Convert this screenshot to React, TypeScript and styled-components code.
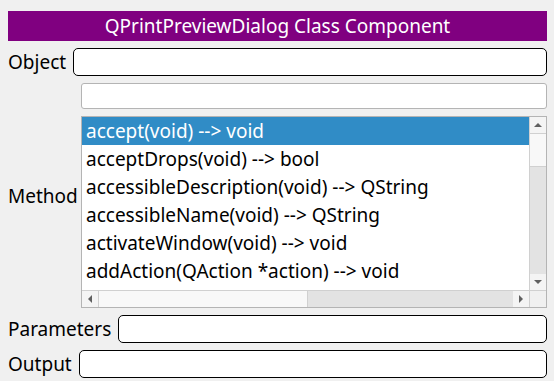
import styled, { createGlobalStyle } from 'styled-components';

const GlobalStyle = createGlobalStyle`
  html, body {
    margin: 0;
    padding: 0;
    background: #f0f0f0;
  }
  body {
    font-family: "Noto Sans", "Open Sans", sans-serif;
    font-size: 19px;
    color: #000;
  }
`;

const methods = [
  'accept(void) --> void',
  'acceptDrops(void) --> bool',
  'accessibleDescription(void) --> QString',
  'accessibleName(void) --> QString',
  'activateWindow(void) --> void',
  'addAction(QAction *action) --> void',
];

function Arrow({ dir }: { dir: 'up' | 'down' | 'left' | 'right' }) {
  const points = {
    up: '1,6 5,2 9,6',
    down: '1,2 5,6 9,2',
    left: '6,1 2,5 6,9',
    right: '2,1 6,5 2,9',
  }[dir];
  const vertical = dir === 'up' || dir === 'down';
  return (
    <svg width={vertical ? 10 : 8} height={vertical ? 8 : 10} viewBox={vertical ? '0 0 10 8' : '0 0 8 10'}>
      <polygon points={points} fill="#606060" />
    </svg>
  );
}

function App() {
  return (
    <>
      <GlobalStyle />
      <Page>
        <TitleBar>QPrintPreviewDialog Class Component</TitleBar>
        <FieldRow>
          <Label>Object</Label>
          <RoundInput />
        </FieldRow>
        <MethodGrid>
          <Label>Method</Label>
          <MethodColumn>
            <FilterInput />
            <ListBox>
              <ListViewport>
                {methods.map((m, i) => (
                  <ListItem key={m} selected={i === 0}>
                    {m}
                  </ListItem>
                ))}
              </ListViewport>
              <VScroll>
                <ScrollButton>
                  <Arrow dir="up" />
                </ScrollButton>
                <VThumb />
                <Track />
                <ScrollButton>
                  <Arrow dir="down" />
                </ScrollButton>
              </VScroll>
              <HScroll>
                <ScrollButton>
                  <Arrow dir="left" />
                </ScrollButton>
                <HThumb />
                <Track />
                <ScrollButton>
                  <Arrow dir="right" />
                </ScrollButton>
              </HScroll>
              <Corner />
            </ListBox>
          </MethodColumn>
        </MethodGrid>
        <FieldRow>
          <Label>Parameters</Label>
          <RoundInput />
        </FieldRow>
        <FieldRow>
          <Label>Output</Label>
          <RoundInput />
        </FieldRow>
      </Page>
    </>
  );
}

const Page = styled.div`
  display: flex;
  flex-direction: column;
  gap: 7px;
  padding: 11px 7px 0 8px;
`;

const TitleBar = styled.div`
  height: 30px;
  background: #800080;
  color: #fff;
  display: flex;
  align-items: center;
  justify-content: center;
`;

const FieldRow = styled.div`
  display: flex;
  align-items: center;
  gap: 7px;
`;

const Label = styled.div`
  white-space: nowrap;
`;

const RoundInput = styled.div`
  flex: 1;
  height: 28px;
  box-sizing: border-box;
  background: #fff;
  border: 1px solid #000;
  border-radius: 5px;
`;

const MethodGrid = styled.div`
  display: grid;
  grid-template-columns: 73px 1fr;
  align-items: center;
`;

const MethodColumn = styled.div`
  display: flex;
  flex-direction: column;
  gap: 7px;
`;

const FilterInput = styled.div`
  height: 26px;
  box-sizing: border-box;
  background: #fff;
  border: 1px solid #b4b4b4;
  border-radius: 3px;
`;

const ListBox = styled.div`
  height: 192px;
  box-sizing: border-box;
  border: 1px solid #b4b4b4;
  background: #fff;
  display: grid;
  grid-template-columns: 1fr 17px;
  grid-template-rows: 1fr 17px;
  overflow: hidden;
`;

const ListViewport = styled.div`
  overflow: hidden;
`;

const ListItem = styled.div<{ selected?: boolean }>`
  height: 28px;
  line-height: 28px;
  padding-left: 4px;
  white-space: nowrap;
  background: ${(p) => (p.selected ? '#308cc6' : 'transparent')};
  color: ${(p) => (p.selected ? '#fff' : '#000')};
`;

const VScroll = styled.div`
  display: flex;
  flex-direction: column;
  background: #e3e3e3;
  border-left: 1px solid #d0d0d0;
`;

const HScroll = styled.div`
  display: flex;
  background: #e3e3e3;
  border-top: 1px solid #d0d0d0;
`;

const ScrollButton = styled.div`
  flex: 0 0 16px;
  display: flex;
  align-items: center;
  justify-content: center;
  background: #f4f4f4;
`;

const VThumb = styled.div`
  flex: 0 0 34px;
  background: #f8f8f8;
  border-top: 1px solid #d0d0d0;
  border-bottom: 1px solid #d0d0d0;
  box-sizing: border-box;
`;

const HThumb = styled.div`
  flex: 0 0 210px;
  background: #f8f8f8;
  border-left: 1px solid #d0d0d0;
  border-right: 1px solid #d0d0d0;
  box-sizing: border-box;
`;

const Track = styled.div`
  flex: 1;
`;

const Corner = styled.div`
  background: #f0f0f0;
  border-left: 1px solid #d0d0d0;
  border-top: 1px solid #d0d0d0;
`;

export default App;
